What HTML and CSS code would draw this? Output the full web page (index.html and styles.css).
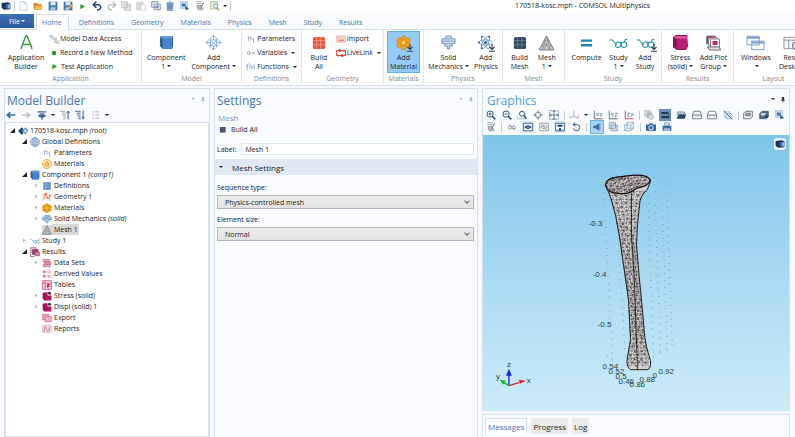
FILE: index.html
```
<!DOCTYPE html>
<html lang="en">
<head>
<meta charset="utf-8">
<title>170518-kosc.mph - COMSOL Multiphysics</title>
<link rel="stylesheet" href="styles.css">
</head>
<body>
<svg class="sprite" aria-hidden="true">
  <linearGradient id="logoFill"><stop offset="0" stop-color="#17365f"/><stop offset=".55" stop-color="#3b73b5"/><stop offset="1" stop-color="#e8eef5"/></linearGradient>
  <symbol id="logo" viewBox="0 0 16 16"><path d="M1 3l10-1 4 2v9l-10 1-4-3z" fill="#17365f"/><path d="M6 5h8v7H6z" fill="url(#logoFill)"/></symbol>
  <symbol id="new" viewBox="0 0 16 16"><path d="M3 1h7l4 4v10H3z M10 1v4h4" fill="#fff" stroke="#a9bdd6"/></symbol>
  <symbol id="open" viewBox="0 0 16 16"><path d="M1 3h5l2 2h6v9H1z" fill="#d98a25"/><path d="M4 8h12l-3 6H1z" fill="#f5b95a"/></symbol>
  <symbol id="save" viewBox="0 0 16 16"><path d="M1 1h14v14H1z" fill="#4473ad"/><path d="M4 1h8v6H4z" fill="#dce8f5"/><path d="M4 10h8v5H4z" fill="#a5c4e4"/></symbol>
  <symbol id="saveas" viewBox="0 0 16 16"><path d="M1 1h14v14H1z" fill="#4473ad"/><path d="M4 1h8v6H4z" fill="#dce8f5"/><path d="M4 10h6v5H4z" fill="#a5c4e4"/><path d="M8 14l1-4 5-5 2 2-5 5z" fill="#e3aa4c"/></symbol>
  <symbol id="play" viewBox="0 0 16 16"><path d="M3 2l11 6-11 6z" fill="#379a28"/></symbol>
  <symbol id="undo" viewBox="0 0 16 16"><path d="M3 6h7a4 4 0 0 1 0 8H8M7 1L2 6l5 5" fill="none" stroke="#274a7d" stroke-width="2.4"/></symbol>
  <symbol id="redo" viewBox="0 0 16 16"><path d="M13 6H6a4 4 0 0 0 0 8h2M9 1l5 5-5 5" fill="none" stroke="#b5b8bd" stroke-width="2"/></symbol>
  <symbol id="copy" viewBox="0 0 16 16"><path d="M1 1h9v10H1zM6 5h9v10H6z" fill="#e4e4e6" stroke="#bfc1c6" stroke-width="1.4"/><path d="M8 8h5M8 11h5" stroke="#bfc1c6"/></symbol>
  <symbol id="paste" viewBox="0 0 16 16"><path d="M1 2h10v12H1z" fill="#ddd" stroke="#c4c6ca"/><path d="M8 6h7v9H8z" fill="#fff" stroke="#c4c6ca"/></symbol>
  <symbol id="dup" viewBox="0 0 16 16"><path d="M1 1h10v9H1zM5 5h10v9H5z" fill="#dde3ed" stroke="#8290a8" stroke-width="1.4"/><path d="M10 7v5M7.500 9.500h5" stroke="#516d99"/></symbol>
  <symbol id="trash" viewBox="0 0 16 16"><path d="M3 4h10l-1 11H4z" fill="#86aad6" stroke="#4873aa"/><path d="M2 3h12M6 1h4M6 6v7M8 6v7M10 6v7" stroke="#4873aa"/></symbol>
  <symbol id="select" viewBox="0 0 16 16"><path d="M1 1h11v11H1z" fill="#cfe1f4" stroke="#6c98ca" stroke-dasharray="2 1"/><path d="M3 4h6v5H3z" fill="#4779b5"/><path d="M8 7l7 6-4 .5L9 15z" fill="#385b8a"/></symbol>
  <symbol id="brush" viewBox="0 0 16 16"><path d="M2 1h9M2 4h9M3 7h7v7H5z" fill="#c9b7aa" stroke="#777f8c"/><path d="M14 2l-4 7 3 5" fill="none" stroke="#5476a4" stroke-width="1.5"/></symbol>
  <symbol id="find" viewBox="0 0 16 16"><path d="M1 1h11v12H1z" fill="#e8edda" stroke="#9aa689"/><circle cx="9" cy="8" r="3.500" fill="#dcebf3" stroke="#5d8796"/><path d="M11 11l4 4" stroke="#be884d" stroke-width="2"/></symbol>
  <symbol id="appA" viewBox="0 0 16 16"><path d="M2 15L7.300 1h1.400L14 15M4 10h8" fill="none" stroke="#3f9e3c" stroke-width="1.600"/></symbol>
  <symbol id="access" viewBox="0 0 16 16"><path d="M1 2h5v3H1zM7 6h5v3H7zM11 11h5v4h-5zM4 5v3h3M9 9v4h2" fill="#dfe7dd" stroke="#a4aeb6"/></symbol>
  <symbol id="dot" viewBox="0 0 16 16"><circle cx="8" cy="8" r="3.500" fill="#2f8a2b"/></symbol>
  <symbol id="cube" viewBox="0 0 16 16"><path d="M1 2l3-1h11v11l-1 3H4l-3-3z" fill="#2b5f9e"/><path d="M4 4h10v11H4z" fill="#4484c8"/><path d="M1 2l3 2h10l1-3H3z" fill="#6b9fd6"/></symbol>
  <symbol id="addcomp" viewBox="0 0 16 16"><path d="M8 .500l7.500 7-7.500 7.500-7.500-7.500zM4 4l8 8M12 4l-8 8M5 5h6v6H5zM8 .500V5M8 11v4M.500 7.500H5M11 7.500h4.500" fill="none" stroke="#789fd0" stroke-width=".8"/></symbol>
  <symbol id="pi" viewBox="0 0 16 16"><path d="M2 5h7M4 5v6M8 5v6M12 8v6M10 8h3" fill="none" stroke="#869ebf" stroke-width="1.200"/></symbol>
  <symbol id="var" viewBox="0 0 16 16"><path d="M2 8c0-3 4-3 4 0s-4 3-4 0M6 5v6h1M9 7h5M9 9h5" fill="none" stroke="#9098a5" stroke-width="1.100"/></symbol>
  <symbol id="fx" viewBox="0 0 16 16"><path d="M5 3H3Q2 3 2 5v8M0 7h4M7 4Q5 8 7 12M8 6l4 5M12 6l-4 5M13 4q2 4 0 8" fill="none" stroke="#6f8db8" stroke-width="1.100"/></symbol>
  <symbol id="brick" viewBox="0 0 16 16"><rect x="2" y="2" width="13" height="13" rx="2" fill="#e2573b"/><path d="M6 2v13M10.500 2v13M2 6h13M2 10.500h13" stroke="#f4a993" stroke-width=".8"/></symbol>
  <symbol id="import" viewBox="0 0 16 16"><path d="M1 3h14v10H1zM1 6h14M6 6v7" fill="#fbecea" stroke="#d9968f"/><path d="M3 10h9M10 8l2 2-2 2" fill="none" stroke="#c3513e" stroke-width="1.200"/></symbol>
  <symbol id="link" viewBox="0 0 16 16"><path d="M7 4H4a4 4 0 0 0 0 8h3M9 4h3a4 4 0 0 1 0 8H9M5 2l3 2-3 2M11 10l-3 2 3 2" fill="none" stroke="#d6432e" stroke-width="2"/></symbol>
  <symbol id="mat" viewBox="0 0 16 16"><g fill="#f2a21c" stroke="#cf7d10" stroke-width=".7"><circle cx="8" cy="3.500" r="2.700"/><circle cx="3.500" cy="6" r="2.700"/><circle cx="12.500" cy="6" r="2.700"/><circle cx="3.500" cy="10.500" r="2.700"/><circle cx="12.500" cy="10.500" r="2.700"/><circle cx="8" cy="13" r="2.700"/><circle cx="8" cy="8" r="2.700" fill="#ffc856"/></g></symbol>
  <symbol id="matring" viewBox="0 0 16 16"><circle cx="8" cy="8" r="7.200" fill="#fff0cf" stroke="#e79a24" stroke-width="1.300"/><path d="M4 6l4-3 4 3v5l-4 2-4-2z" fill="#f1a52d"/><path d="M4 6l4 2 4-2M8 8v5" stroke="#fff1ca" fill="none"/></symbol>
  <symbol id="plus" viewBox="0 0 16 16"><path d="M8 0v11M3 6l5 5 5-5M2 14.500h12" fill="none" stroke="#2c4057" stroke-width="2.200"/></symbol>
  <symbol id="solid" viewBox="0 0 16 16"><path d="M5 1h6v3h4v5h-3v3H9v3H7v-3H4V9H1V4h4z" fill="#cad9eb" stroke="#7897bd"/><path d="M1 6.500h14M4 9.500h8M5 4h6" stroke="#7897bd" stroke-width=".8"/></symbol>
  <symbol id="atom" viewBox="0 0 16 16"><g fill="none" stroke="#6597bf" stroke-width=".9"><ellipse cx="8" cy="8" rx="7.300" ry="2.800"/><ellipse cx="8" cy="8" rx="7.300" ry="2.800" transform="rotate(60 8 8)"/><ellipse cx="8" cy="8" rx="7.300" ry="2.800" transform="rotate(120 8 8)"/></g><g fill="#285f93"><circle cx="8" cy="8" r="1.600"/><circle cx="4" cy="1.800" r="1"/><circle cx="12" cy="1.800" r="1"/><circle cx="1" cy="8" r="1"/><circle cx="4" cy="14" r="1"/></g></symbol>
  <symbol id="darkbrick" viewBox="0 0 16 16"><rect x="2" y="2" width="13" height="13" rx="2" fill="#33475c"/><path d="M6 2v13M10.500 2v13M2 6h13M2 10.500h13" stroke="#73889e" stroke-width=".8"/></symbol>
  <symbol id="mesh" viewBox="0 0 16 16"><path d="M8 1l7.500 14H.500z" fill="#c6c8ca" stroke="#6f757b" stroke-width=".9"/><path d="M5.500 5.500h5M3.500 10h9M8 1l4 14M8 1L4 15M5.500 5.500L11 15M10.500 5.500L5 15M3.500 10L6 15M12.500 10L10 15" fill="none" stroke="#82878c" stroke-width=".6"/></symbol>
  <symbol id="equal" viewBox="0 0 16 16"><path d="M2 6h12M2 11h12" stroke="#1c88aa" stroke-width="2.600"/></symbol>
  <symbol id="study" viewBox="0 0 22 16"><path d="M1 5q2-2 4 1t4 4" fill="none" stroke="#2f93ad" stroke-width="1.200"/><circle cx="10.500" cy="10" r="3.200" fill="none" stroke="#2f93ad" stroke-width="1.200"/><circle cx="17.500" cy="10" r="3.200" fill="none" stroke="#2f93ad" stroke-width="1.200"/><path d="M13 8q1-2 2 0M18 7q0-4 3-3" fill="none" stroke="#2f93ad" stroke-width="1.200"/></symbol>
  <symbol id="stress" viewBox="0 0 16 16"><path d="M0 2l3-2h12l1 12-2 4H4l-4-3z" fill="#8c1054"/><path d="M4 4h11v11H4z" fill="#bf1c74"/><path d="M0 2l4 2h11l1-3H3z" fill="#d8559a"/></symbol>
  <symbol id="plotgroup" viewBox="0 0 16 16"><path d="M1 1h9v8H1z" fill="#c3226f" stroke="#8f8790"/><path d="M3 3h9v8H3z" fill="#f3e7ed" stroke="#8f8790"/><path d="M5 4h9v8H5z" fill="#fff" stroke="#8f8790"/><path d="M7 6h5v4H7z" fill="#c3226f"/><path d="M2 12h12l1 3H4z" fill="#e3e1e4" stroke="#77717b"/></symbol>
  <symbol id="windows" viewBox="0 0 20 16"><path d="M1 1h13v9H1zM6 6h13v9H6z" fill="#f8fbff" stroke="#7f9fd0"/><path d="M1 2.500h13M6 7.500h13" stroke="#7f9fd0" stroke-width="2"/></symbol>
  <symbol id="reset" viewBox="0 0 20 16"><path d="M1 2h17v12H1zM1 5h17M6 5v9" fill="#f5f6f8" stroke="#8d929b"/><path d="M17 8a4 4 0 1 0 1 4" fill="none" stroke="#6289c0" stroke-width="1.500"/></symbol>
  <symbol id="left" viewBox="0 0 16 16"><path d="M15 8H3M7 4L2 8l5 4" fill="none" stroke="#386da8" stroke-width="2.600"/></symbol>
  <symbol id="right" viewBox="0 0 16 16"><path d="M1 8h12M9 4l5 4-5 4" fill="none" stroke="#b7bac0" stroke-width="2"/></symbol>
  <symbol id="show" viewBox="0 0 16 16"><path d="M1 3h14M4 6h8" stroke="#4a6a91" stroke-width="2"/><path d="M1 9q7-4 14 0-7 6-14 0" fill="#3e648f"/><path d="M8 10v5" stroke="#294d76" stroke-width="2"/></symbol>
  <symbol id="collapse" viewBox="0 0 16 16"><path d="M0 2h9M3 5h6M3 8h6M5 11h4M5 14h4" stroke="#8795ab" stroke-width="1.300"/><path d="M13 15V2M10.500 5L13 2l2.500 3" fill="none" stroke="#2b5790" stroke-width="1.500"/></symbol>
  <symbol id="expand" viewBox="0 0 16 16"><path d="M0 2h9M3 5h6M3 8h6M5 11h4M5 14h4" stroke="#496a93" stroke-width="1.500"/><path d="M13 1v13M10.500 11l2.500 3 2.500-3" fill="none" stroke="#2b5790" stroke-width="1.500"/></symbol>
  <symbol id="nodes" viewBox="0 0 16 16"><path d="M2 3h3M7 3h6M2 8h3M7 8h6M2 13h3M7 13h6" stroke="#a9adb5" stroke-width="1.500"/></symbol>
  <symbol id="root" viewBox="0 0 16 16"><path d="M0 8l6-6 3 3-2 3 2 3-3 3z" fill="#204b86"/><path d="M7 8l5-6 4 5-4 7z" fill="#5b88bf"/><path d="M9 8l3-3 2 3-2 3z" fill="#dce8f5"/></symbol>
  <symbol id="globe" viewBox="0 0 16 16"><circle cx="8" cy="8" r="7.200" fill="#e8f0fa" stroke="#6283b4"/><ellipse cx="8" cy="8" rx="3.500" ry="7.200" fill="none" stroke="#6283b4"/><path d="M8 1v14M1 8h14M2 4.500h12M2 11.500h12" stroke="#6283b4" stroke-width=".9"/></symbol>
  <symbol id="defs" viewBox="0 0 16 16"><path d="M2 2h12v12H2z" fill="#4f80bc"/><path d="M2 5h12M2 8h12M2 11h12M6 2v12" stroke="#a9c5e5"/></symbol>
  <symbol id="geom" viewBox="0 0 16 16"><path d="M1 14L6 3l7 11M1 4l9 6 5-4M4 10h8" fill="none" stroke="#e17c5b" stroke-width="1.300"/><path d="M4 1h4v4H4zM11 4h3v3h-3z" fill="#e17c5b"/></symbol>
  <symbol id="gem" viewBox="0 0 16 16"><path d="M4 2h8v3h3v4l-4 2-3 4-3-4-4-2V5h3z" fill="#aec6e2" stroke="#6f90bb"/><path d="M1 8h14M4 5h8" stroke="#6f90bb"/></symbol>
  <symbol id="results" viewBox="0 0 16 16"><path d="M1 1h9v8H1z" fill="#e9bdd2" stroke="#a45880"/><path d="M4 4h9v8H4z" fill="#b5306e" stroke="#774a62"/><path d="M8 8h7v6H8z" fill="#df7fa8" stroke="#774a62"/><path d="M1 10v5h6" fill="none" stroke="#817680" stroke-width="1.500"/></symbol>
  <symbol id="data" viewBox="0 0 16 16"><path d="M2 2h10v4H2zM4 6h10v4H4zM2 10h11v4H2z" fill="#e9a5bd" stroke="#bd5e82"/></symbol>
  <symbol id="derived" viewBox="0 0 16 16"><path d="M2 3h3v3H2zM2 10h3v3H2zM10 3h4M10 6h4M10 11h4M10 13h4M8 3v3M8 10v3" fill="#dc8ba9" stroke="#cd648c" stroke-width="1.200"/></symbol>
  <symbol id="tables" viewBox="0 0 16 16"><path d="M1 1h14v14H1zM1 5h14M5 1v14M10 5v10M5 10h10" fill="#fae1eb" stroke="#c24b7b" stroke-width="1.200"/><path d="M8 6h6L8 13z" fill="#ca3970"/></symbol>
  <symbol id="plot" viewBox="0 0 16 16"><path d="M1 3l3-1h5v5h6v8H4l-3-3z" fill="#b5125f"/><path d="M4 5v10" stroke="#7c0944"/><circle cx="12" cy="3.500" r="2.500" fill="#5b2143"/></symbol>
  <symbol id="export" viewBox="0 0 16 16"><path d="M1 2h10v9H1zM5 6h10v8H5z" fill="#eda4bf" stroke="#c45b84"/><path d="M6 8h7M6 11h7" stroke="#fff"/></symbol>
  <symbol id="reports" viewBox="0 0 16 16"><path d="M1 2h14v12H1z" fill="#f7e3e9" stroke="#d6adb9"/><path d="M3 12l3-8 3 8 4-8M4 4v8M12 4v8" fill="none" stroke="#c4708a"/></symbol>
  <symbol id="zin" viewBox="0 0 16 16"><circle cx="6.500" cy="6.500" r="5" fill="#f5f9fd" stroke="#2f5584" stroke-width="1.600"/><path d="M10 10l5 5" stroke="#2f5584" stroke-width="2.600"/><path d="M4 6.500h5M6.500 4v5" stroke="#2f5584" stroke-width="1.400"/></symbol>
  <symbol id="zout" viewBox="0 0 16 16"><circle cx="6.500" cy="6.500" r="5" fill="#f5f9fd" stroke="#2f5584" stroke-width="1.600"/><path d="M10 10l5 5" stroke="#2f5584" stroke-width="2.600"/><path d="M4 6.500h5" stroke="#2f5584" stroke-width="1.400"/></symbol>
  <symbol id="zbox" viewBox="0 0 16 16"><path d="M1 15V8l7-7" fill="none" stroke="#8193ad" stroke-dasharray="2 1"/><path d="M2 14h11V5" fill="none" stroke="#6e84a3"/><circle cx="8" cy="6" r="4" fill="#f5f9fd" stroke="#2f5584" stroke-width="1.500"/><path d="M11 9l4 5" stroke="#2f5584" stroke-width="2.200"/></symbol>
  <symbol id="cross" viewBox="0 0 16 16"><circle cx="8" cy="8" r="4.500" fill="none" stroke="#69737f" stroke-width="1.200"/><path d="M8 0v6M8 10v6M0 8h6M10 8h6" stroke="#69737f" stroke-width="1.300"/></symbol>
  <symbol id="extents" viewBox="0 0 16 16"><path d="M1 1h14v14H1z" fill="none" stroke="#5d7594" stroke-dasharray="4 1"/><path d="M8 1v14M1 8h14M6 3l2-2 2 2M6 13l2 2 2-2M3 6L1 8l2 2M13 6l2 2-2 2" fill="none" stroke="#3f5f87" stroke-width="1.300"/></symbol>
  <symbol id="axes" viewBox="0 0 16 16"><path d="M8 1v9" stroke="#94a1c2" stroke-width="1.300"/><path d="M8 10l-6 3-1-4" fill="none" stroke="#91a89a" stroke-width="1.300"/><path d="M8 10l6 3 1-4" fill="none" stroke="#d48a83" stroke-width="1.300"/></symbol>
  <symbol id="xy" viewBox="0 0 16 16"><path d="M2 1v13h13" fill="none" stroke="#4f6c8f" stroke-width="1.400"/><path d="M5 5l4 5M9 5l-4 5M11 5l2 3M15 5l-3 6" stroke="#64799a" stroke-width="1.200"/><path d="M2 14h13" stroke="#d37c72"/></symbol>
  <symbol id="yz" viewBox="0 0 16 16"><path d="M2 1v13h13" fill="none" stroke="#4f6c8f" stroke-width="1.400"/><path d="M5 5l2 3M9 5l-3 6M11 5h4l-4 5h4" fill="none" stroke="#64799a" stroke-width="1.200"/><path d="M2 14h13" stroke="#70a277"/></symbol>
  <symbol id="zx" viewBox="0 0 16 16"><path d="M2 1v13h13" fill="none" stroke="#c03d48" stroke-width="1.400"/><path d="M5 5h4l-4 5h4M11 5l4 5M15 5l-4 5" fill="none" stroke="#64799a" stroke-width="1.200"/></symbol>
  <symbol id="overlap" viewBox="0 0 16 16"><path d="M1 1h9v9H1z" fill="#d7dade" stroke="#a8adb4"/><path d="M4 4h9v9H4z" fill="#b3b8be"/><circle cx="11" cy="11" r="4" fill="#d8dadc" stroke="#a5a9af"/></symbol>
  <symbol id="domains" viewBox="0 0 16 16"><path d="M2 3h11l2 4v6H2z" fill="#1f3d61"/><path d="M2 8h12" stroke="#c3d6ea" stroke-width="1.500"/></symbol>
  <symbol id="dfolder" viewBox="0 0 16 16"><path d="M2 3h11l2 4H2z" fill="#bfd0e2" stroke="#4f6c8f"/><path d="M4 7h12l-2 7H1z" fill="#26476d"/></symbol>
  <symbol id="box" viewBox="0 0 16 16"><path d="M3 2h10l2 5v7H1V7zM1 8h14" fill="#f7f9fc" stroke="#5f738c" stroke-width="1.400"/><path d="M4 10h8" stroke="#a1afc0"/></symbol>
  <symbol id="nobox" viewBox="0 0 16 16"><path d="M2 3h9v8H2zM5 6h9v8H5z" fill="none" stroke="#7495bd"/><path d="M1 1l14 14" stroke="#385f91" stroke-width="1.500"/></symbol>
  <symbol id="clip" viewBox="0 0 16 16"><path d="M1 5l4-3h10v9l-4 3H1z" fill="#e7e9ed" stroke="#626e7d" stroke-width="1.300"/><path d="M4 5h8v4H4zM6 2h4" stroke="#626e7d" fill="#8f9bac"/></symbol>
  <symbol id="clip2" viewBox="0 0 16 16"><path d="M1 6l4-4h10v8l-4 4H1z" fill="#526982" stroke="#334961"/><path d="M3 5h8v4H3z" fill="#cbd4df"/><circle cx="12" cy="10" r="3" fill="#2d4967"/></symbol>
  <symbol id="chain" viewBox="0 0 16 16"><circle cx="5" cy="9" r="2.500" fill="none" stroke="#7c838d" stroke-width="1.300"/><circle cx="11" cy="9" r="2.500" fill="none" stroke="#7c838d" stroke-width="1.300"/><path d="M3 4l10 9" stroke="#7c838d"/></symbol>
  <symbol id="eye" viewBox="0 0 16 16"><path d="M1 2h14v12H1z" fill="#f5f9fd" stroke="#335780" stroke-width="1.400"/><path d="M2 8q6-6 12 0-6 6-12 0" fill="#284b73"/><circle cx="8" cy="8" r="1.200" fill="#d5e5f6"/></symbol>
  <symbol id="noeye" viewBox="0 0 16 16"><path d="M1 2h14v12H1z" fill="#f5f9fd" stroke="#7f8c9c" stroke-width="1.300"/><path d="M3 8q5-5 10 0-5 5-10 0M4 4l9 9" fill="none" stroke="#7f8c9c" stroke-width="1.300"/></symbol>
  <symbol id="eyedown" viewBox="0 0 16 16"><path d="M1 2h14v12H1z" fill="#f5f9fd" stroke="#335780" stroke-width="1.400"/><path d="M3 6q5-4 10 0-5 4-10 0M6 10h4v4H6z" fill="#284b73"/></symbol>
  <symbol id="rot" viewBox="0 0 16 16"><path d="M4 4h5a5 5 0 1 1-5 6M7 1L3 4l4 3" fill="none" stroke="#435c7e" stroke-width="1.600"/></symbol>
  <symbol id="light" viewBox="0 0 16 16"><path d="M2 6h3l7-4v12l-7-4H2z" fill="#416e9d"/><path d="M13 2v12" stroke="#6b94bd"/></symbol>
  <symbol id="trans" viewBox="0 0 16 16"><path d="M2 1h10v9H2zM5 5h10v9H5z" fill="#d4e3f2" stroke="#6b92bf" stroke-width="1.200"/></symbol>
  <symbol id="wire" viewBox="0 0 16 16"><path d="M1 5l4-4h10v9l-4 4H1zM1 5h10v9M11 5l4-4M5 1v9h10M1 14l4-4" fill="none" stroke="#6b92bf"/></symbol>
  <symbol id="camera" viewBox="0 0 16 16"><path d="M0 4h4l2-2h4l2 2h4v10H0z" fill="#2e659f"/><circle cx="8" cy="9" r="3.500" fill="#2e659f" stroke="#fff" stroke-width="1.400"/></symbol>
  <symbol id="print" viewBox="0 0 16 16"><path d="M4 1h8v5H4z" fill="#c9dcf0" stroke="#6d94bf"/><path d="M1 6h14v8H1z" fill="#3b6fa9"/><path d="M3 10h10v4H3z" fill="#9fbddd"/></symbol>
  <symbol id="pin" viewBox="0 0 16 16"><path d="M5 1h6v8H5zM3 9h10v2H3zM7 11h2v5H7z" fill="currentColor"/></symbol>
</svg>

<header class="titlebar">
  <div class="quick">
    <svg class="ic"><use href="#logo"/></svg><i class="bar"></i>
    <button class="tool" aria-label="New"><svg class="ic"><use href="#new"/></svg></button>
    <button class="tool" aria-label="Open"><svg class="ic"><use href="#open"/></svg></button>
    <button class="tool" aria-label="Save"><svg class="ic"><use href="#save"/></svg></button>
    <button class="tool" aria-label="Save as"><svg class="ic"><use href="#saveas"/></svg></button>
    <button class="tool" aria-label="Run"><svg class="ic small"><use href="#play"/></svg></button>
    <button class="tool" aria-label="Undo"><svg class="ic"><use href="#undo"/></svg></button>
    <button class="tool" aria-label="Redo"><svg class="ic"><use href="#redo"/></svg></button>
    <button class="tool" aria-label="Copy"><svg class="ic"><use href="#copy"/></svg></button>
    <button class="tool" aria-label="Paste"><svg class="ic"><use href="#paste"/></svg></button>
    <button class="tool" aria-label="Duplicate"><svg class="ic"><use href="#dup"/></svg></button>
    <button class="tool" aria-label="Delete"><svg class="ic"><use href="#trash"/></svg></button>
    <button class="tool" aria-label="Select"><svg class="ic"><use href="#select"/></svg></button>
    <button class="tool" aria-label="Clear"><svg class="ic"><use href="#brush"/></svg></button>
    <button class="tool" aria-label="Find"><svg class="ic"><use href="#find"/></svg></button>
    <i class="caret"></i><i class="bar"></i>
  </div>
  <h1>170518-kosc.mph - COMSOL Multiphysics</h1>
</header>

<nav class="tabs">
  <button class="file">File<i class="caret"></i></button>
  <a href="#" class="active">Home</a><a href="#">Definitions</a><a href="#">Geometry</a><a href="#">Materials</a><a href="#">Physics</a><a href="#">Mesh</a><a href="#">Study</a><a href="#">Results</a>
</nav>

<div class="ribbon">
  <section class="group g-app"><div class="items">
    <button class="big w-app"><svg class="bi"><use href="#appA"/></svg><span>Application<br>Builder</span></button>
    <div class="stack">
      <button><svg class="ic"><use href="#access"/></svg>Model Data Access</button>
      <button><svg class="ic"><use href="#dot"/></svg>Record a New Method</button>
      <button><svg class="ic small"><use href="#play"/></svg>Test Application</button>
    </div></div><h2>Application</h2></section>
  <section class="group g-model"><div class="items">
    <button class="big"><svg class="bi"><use href="#cube"/></svg><span>Component<br>1<i class="caret"></i></span></button>
    <button class="big"><svg class="bi wide"><use href="#addcomp"/></svg><span>Add<br>Component<i class="caret"></i></span></button>
    </div><h2>Model</h2></section>
  <section class="group g-defs"><div class="items"><div class="stack">
      <button><svg class="ic"><use href="#pi"/></svg>Parameters</button>
      <button><svg class="ic"><use href="#var"/></svg>Variables<i class="caret"></i></button>
      <button><svg class="ic"><use href="#fx"/></svg>Functions<i class="caret"></i></button>
    </div></div><h2>Definitions</h2></section>
  <section class="group g-geom"><div class="items">
    <button class="big w-build"><svg class="bi"><use href="#brick"/></svg><span>Build<br>All</span></button>
    <div class="stack">
      <button><svg class="ic"><use href="#import"/></svg>Import</button>
      <button><svg class="ic"><use href="#link"/></svg>LiveLink<i class="caret"></i></button>
    </div></div><h2>Geometry</h2></section>
  <section class="group g-mat"><div class="items">
    <button class="big on"><span class="pic"><svg class="bi"><use href="#mat"/></svg><svg class="badge"><use href="#plus"/></svg></span><span>Add<br>Material</span></button>
    </div><h2>Materials</h2></section>
  <section class="group g-phys"><div class="items">
    <button class="big"><svg class="bi"><use href="#solid"/></svg><span>Solid<br>Mechanics<i class="caret"></i></span></button>
    <button class="big"><span class="pic"><svg class="bi"><use href="#atom"/></svg><svg class="badge"><use href="#plus"/></svg></span><span>Add<br>Physics</span></button>
    </div><h2>Physics</h2></section>
  <section class="group g-mesh"><div class="items">
    <button class="big"><svg class="bi"><use href="#darkbrick"/></svg><span>Build<br>Mesh</span></button>
    <button class="big"><svg class="bi wide"><use href="#mesh"/></svg><span>Mesh<br>1<i class="caret"></i></span></button>
    </div><h2>Mesh</h2></section>
  <section class="group g-study"><div class="items">
    <button class="big"><svg class="bi"><use href="#equal"/></svg><span>Compute</span></button>
    <button class="big"><svg class="bi wide"><use href="#study"/></svg><span>Study<br>1<i class="caret"></i></span></button>
    <button class="big"><span class="pic"><svg class="bi wide"><use href="#study"/></svg><svg class="badge"><use href="#plus"/></svg></span><span>Add<br>Study</span></button>
    </div><h2>Study</h2></section>
  <section class="group g-res"><div class="items">
    <button class="big"><svg class="bi"><use href="#stress"/></svg><span>Stress<br>(solid)<i class="caret"></i></span></button>
    <button class="big"><svg class="bi wide"><use href="#plotgroup"/></svg><span>Add Plot<br>Group<i class="caret"></i></span></button>
    </div><h2>Results</h2></section>
  <section class="group g-lay"><div class="items">
    <button class="big"><svg class="bi wide"><use href="#windows"/></svg><span>Windows<br><i class="caret"></i></span></button>
    <button class="big"><svg class="bi wide"><use href="#reset"/></svg><span>Reset<br>Desktop</span></button>
    </div><h2>Layout</h2></section>
</div>

<main class="desk">
  <section class="panel builder">
    <div class="head"><h2>Model Builder</h2><span class="ctl"><i class="caret"></i><svg><use href="#pin"/></svg></span></div>
    <div class="buildbar">
      <button class="tool" aria-label="Back"><svg class="ic"><use href="#left"/></svg></button>
      <button class="tool" aria-label="Forward"><svg class="ic"><use href="#right"/></svg></button>
      <button class="tool" aria-label="Show"><svg class="ic"><use href="#show"/></svg></button>
      <i class="caret"></i>
      <button class="tool" aria-label="Collapse"><svg class="ic"><use href="#collapse"/></svg></button>
      <button class="tool" aria-label="Expand"><svg class="ic"><use href="#expand"/></svg></button>
      <button class="tool" aria-label="Node text"><svg class="ic"><use href="#nodes"/></svg></button>
      <i class="caret"></i>
    </div>
    <ul class="tree">
      <li><div class="row"><i class="tw open"></i><svg class="ic"><use href="#root"/></svg><span>170518-kosc.mph <em>(root)</em></span></div>
      <ul>
        <li><div class="row"><i class="tw open"></i><svg class="ic"><use href="#globe"/></svg><span>Global Definitions</span></div>
          <ul>
            <li class="row"><i class="tw"></i><svg class="ic"><use href="#pi"/></svg><span>Parameters</span></li>
            <li class="row"><i class="tw"></i><svg class="ic"><use href="#matring"/></svg><span>Materials</span></li>
          </ul></li>
        <li><div class="row"><i class="tw open"></i><svg class="ic"><use href="#cube"/></svg><span>Component 1 <em>(comp1)</em></span></div>
          <ul>
            <li class="row"><i class="tw shut"></i><svg class="ic"><use href="#defs"/></svg><span>Definitions</span></li>
            <li class="row"><i class="tw shut"></i><svg class="ic"><use href="#geom"/></svg><span>Geometry 1</span></li>
            <li class="row"><i class="tw shut"></i><svg class="ic"><use href="#mat"/></svg><span>Materials</span></li>
            <li class="row"><i class="tw shut"></i><svg class="ic"><use href="#gem"/></svg><span>Solid Mechanics <em>(solid)</em></span></li>
            <li class="row sel"><i class="tw"></i><svg class="ic"><use href="#mesh"/></svg><span>Mesh 1</span></li>
          </ul></li>
        <li class="row"><i class="tw shut"></i><svg class="ic"><use href="#study"/></svg><span>Study 1</span></li>
        <li><div class="row"><i class="tw open"></i><svg class="ic"><use href="#results"/></svg><span>Results</span></div>
          <ul>
            <li class="row"><i class="tw shut"></i><svg class="ic"><use href="#data"/></svg><span>Data Sets</span></li>
            <li class="row"><i class="tw"></i><svg class="ic"><use href="#derived"/></svg><span>Derived Values</span></li>
            <li class="row"><i class="tw"></i><svg class="ic"><use href="#tables"/></svg><span>Tables</span></li>
            <li class="row"><i class="tw shut"></i><svg class="ic"><use href="#plot"/></svg><span>Stress (solid)</span></li>
            <li class="row"><i class="tw shut"></i><svg class="ic"><use href="#plot"/></svg><span>Displ (solid) 1</span></li>
            <li class="row"><i class="tw"></i><svg class="ic"><use href="#export"/></svg><span>Export</span></li>
            <li class="row"><i class="tw"></i><svg class="ic"><use href="#reports"/></svg><span>Reports</span></li>
          </ul></li>
      </ul></li>
    </ul>
  </section>

  <section class="panel settings">
    <div class="head"><h2>Settings</h2><span class="ctl"><i class="caret"></i><svg><use href="#pin"/></svg></span></div>
    <h3>Mesh</h3>
    <button class="buildall"><svg class="ic small"><use href="#darkbrick"/></svg>Build All</button>
    <div class="labelrow"><label for="lab">Label:</label><input id="lab" type="text" value="Mesh 1"></div>
    <button class="secthead"><i class="caret"></i>Mesh Settings</button>
    <div class="fields">
      <label for="seq">Sequence type:</label>
      <span class="pick"><select id="seq"><option>Physics-controlled mesh</option></select></span>
      <label for="size">Element size:</label>
      <span class="pick"><select id="size"><option>Normal</option></select></span>
    </div>
  </section>

  <div class="rightcol">
    <section class="panel graphics">
      <div class="head"><h2>Graphics</h2><span class="ctl dark"><i class="caret"></i><svg><use href="#pin"/></svg></span></div>
      <div class="gbar">
        <button class="tool" aria-label="Zoom in"><svg class="ic"><use href="#zin"/></svg></button>
        <button class="tool" aria-label="Zoom out"><svg class="ic"><use href="#zout"/></svg></button>
        <button class="tool" aria-label="Zoom box"><svg class="ic"><use href="#zbox"/></svg></button>
        <button class="tool" aria-label="Zoom selected"><svg class="ic"><use href="#cross"/></svg></button>
        <button class="tool" aria-label="Zoom extents"><svg class="ic"><use href="#extents"/></svg></button>
        <i class="bar"></i>
        <button class="tool" aria-label="Default view"><svg class="ic"><use href="#axes"/></svg></button>
        <i class="caret"></i>
        <button class="tool" aria-label="XY view"><svg class="ic"><use href="#xy"/></svg></button>
        <button class="tool" aria-label="YZ view"><svg class="ic"><use href="#yz"/></svg></button>
        <button class="tool" aria-label="ZX view"><svg class="ic"><use href="#zx"/></svg></button>
        <i class="bar"></i>
        <button class="tool" aria-label="Overlap"><svg class="ic"><use href="#overlap"/></svg></button>
        <button class="tool deep" aria-label="Select domains"><svg class="ic"><use href="#domains"/></svg></button>
        <button class="tool" aria-label="Select boundaries"><svg class="ic"><use href="#dfolder"/></svg></button>
        <button class="tool" aria-label="Select edges"><svg class="ic"><use href="#box"/></svg></button>
        <button class="tool" aria-label="Select points"><svg class="ic"><use href="#box"/></svg></button>
        <button class="tool" aria-label="No selection"><svg class="ic"><use href="#nobox"/></svg></button>
        <i class="bar"></i>
        <button class="tool" aria-label="Clip"><svg class="ic"><use href="#clip"/></svg></button>
        <button class="tool" aria-label="Clip view"><svg class="ic"><use href="#clip2"/></svg></button>
        <button class="tool" aria-label="Select box"><svg class="ic"><use href="#select"/></svg></button>
      </div>
      <div class="gbar second">
        <button class="tool" aria-label="Clear selection"><svg class="ic"><use href="#brush"/></svg></button>
        <i class="bar"></i>
        <button class="tool" aria-label="Link"><svg class="ic"><use href="#chain"/></svg></button>
        <button class="tool lit" aria-label="Show"><svg class="ic"><use href="#eye"/></svg></button>
        <button class="tool" aria-label="Hide"><svg class="ic"><use href="#noeye"/></svg></button>
        <button class="tool lit" aria-label="Show selected"><svg class="ic"><use href="#eyedown"/></svg></button>
        <button class="tool" aria-label="Reset hiding"><svg class="ic"><use href="#rot"/></svg></button>
        <i class="bar"></i>
        <button class="tool on" aria-label="Scene light"><svg class="ic"><use href="#light"/></svg></button>
        <button class="tool" aria-label="Transparency"><svg class="ic"><use href="#trans"/></svg></button>
        <button class="tool" aria-label="Wireframe"><svg class="ic"><use href="#wire"/></svg></button>
        <i class="bar"></i>
        <button class="tool" aria-label="Snapshot"><svg class="ic"><use href="#camera"/></svg></button>
        <button class="tool" aria-label="Print"><svg class="ic"><use href="#print"/></svg></button>
      </div>
      <div class="view">
        <svg class="scene" viewBox="0 0 307 276" preserveAspectRatio="xMidYMid meet">
          <g class="guides">
            <path d="M121 50L130 230M133 60L143 225M165 40L171 224M172 42L178 219M179 40L185 222M184 44L190 210M165 224L193 208M136 230L121 218"/>
          </g>
          <path class="bone" d="M123 50Q123 43 133 42L150 40Q168 40 168 46L165 54Q157 61 157 70L155 90 154 110 157 145 160 175 162 200 164 212 168 226Q169 234 165 235L148 235Q143 232 145 222L148 205 146 165 141 130 137 102 133 80 128 62Z"/>
          <path id="shaft" class="mesh"/>
          <path class="ridge" d="M149 58L149 100 152 150 155 235"/>
          <path class="cap" d="M123 50Q123 44 133 42L150 40Q166 39 168 45Q166 51 154 53Q146 60 136 58Q125 58 123 50Z"/>
          <path id="plateau" class="mesh"/>
          <g class="ticks">
            <text x="106" y="91">-0.3</text><text x="110" y="142">-0.4</text><text x="115" y="192">-0.5</text>
            <text x="120" y="234">0.54</text><text x="126" y="239">0.52</text><text x="133" y="244">0.5</text><text x="136" y="249">0.46</text><text x="147" y="252">0.86</text><text x="157" y="247">0.88</text><text x="170" y="243">0</text><text x="176" y="239">0.92</text>
          </g>
          <g class="triad">
            <path d="M26 251V239" stroke="#1a2be0"/><path d="M26 234l3 7h-6z" fill="#1a2be0"/>
            <path d="M26 251L36 248" stroke="#d8202c"/><path d="M43 246l-7-1 1 4z" fill="#d8202c"/>
            <path d="M26 251L21 248" stroke="#18b52d"/><path d="M17 245l6 1-3 4z" fill="#18b52d"/>
            <text x="24" y="232">z</text><text x="44" y="248">x</text><text x="13" y="244">y</text>
          </g>
        </svg>
        <span class="corner"><svg class="ic"><use href="#logo"/></svg></span>
      </div>
    </section>
    <section class="panel messages">
      <button class="active">Messages</button><button>Progress</button><button>Log</button>
    </section>
  </div>
</main>
<script src="mesh.js"></script>
</body>
</html>
```
FILE: styles.css
```
* { box-sizing: border-box; margin: 0; padding: 0; }
:root { --line: #d6dfeb; --pale: #f9fbfe; --blue: #4a73b0; }
body {
  height: 100vh; display: flex; flex-direction: column; overflow: hidden;
  font: 7px/9px "Open Sans", "Noto Sans", sans-serif; color: #222; background: #f5f8fc;
}
button, input, select { font: inherit; color: inherit; border: 0; background: none; }
h1, h2, h3 { font-weight: 400; }
a { color: inherit; text-decoration: none; }
ul { list-style: none; }
svg { display: block; flex: none; }
.sprite { position: absolute; width: 0; height: 0; }
.ic { width: 10px; height: 10px; }
.ic.small { width: 7px; height: 7px; margin: 0 2px; }
.bar { width: 1px; height: 9px; background: #c5cad2; }
.caret { display: inline-block; flex: none; border: 2px solid transparent; border-top-color: currentColor; border-bottom: 0; }
.tool { display: grid; place-items: center; width: 12px; height: 12px; flex: none; }
.tool.on { background: #a8d3f5; outline: 1px solid #6fb0e2; }
.tool.lit { background: #d9e7f5; }
.tool.deep { background: #6f90b5; }

.titlebar { display: flex; align-items: flex-start; height: 14px; background: #fff; flex: none; }
.quick { display: flex; align-items: center; justify-content: space-between; width: 231px; padding-left: 1px; flex: none; }
.titlebar h1 { font-size: 7px; line-height: 11px; margin-left: 284px; white-space: nowrap; }

.tabs { display: flex; align-items: stretch; height: 16px; background: var(--pale); border-bottom: 1px solid var(--line); color: var(--blue); flex: none; }
.tabs a { padding: 4px 8px 0; margin-right: 1px; }
.tabs .active { background: #fff; border: 1px solid var(--line); border-bottom: 0; padding: 3px 6px 0 5px; margin: 0 2px; height: 16px; }
.tabs .file { display: flex; align-items: center; justify-content: center; gap: 1px; width: 34px; height: 14px; background: linear-gradient(#3c6fb4, #2d5ca0); color: #fff; }

.ribbon { display: flex; height: 56px; background: #fff; border-bottom: 1px solid var(--line); flex: none; overflow: hidden; }
.group { display: flex; flex-direction: column; flex: none; padding-top: 1px; border-right: 1px solid #e2e6ec; margin-bottom: 2px; }
.group h2 { font-size: 7px; line-height: 9px; color: #858a92; text-align: center; }
.items { display: flex; align-items: flex-start; justify-content: space-evenly; height: 44px; }
.big { display: flex; flex-direction: column; align-items: center; gap: 3px; padding: 4px 1px 0; line-height: 9px; white-space: nowrap; }
.big .caret { margin-left: 2px; vertical-align: 2px; }
.big.on { background: #93cbf8; border: 1px solid #63aee8; padding: 3px 0 0; width: 33px; height: 42px; }
.bi { width: 15px; height: 15px; }
.bi.wide { width: 19px; height: 16px; margin-bottom: -1px; }
.pic { position: relative; }
.badge { position: absolute; right: -3px; bottom: -2px; width: 8px; height: 8px; }
.stack { display: flex; flex-direction: column; gap: 5px; padding-top: 3px; }
.stack button { display: flex; align-items: center; gap: 1px; height: 9px; white-space: nowrap; }
.stack .caret { margin-left: 3px; }
.w-app { width: 46px; }
.w-build { width: 30px; }
.g-app { width: 142px; }
.g-app .items { justify-content: flex-start; padding-left: 3px; }
.g-model { width: 100px; }
.g-defs { width: 60px; }
.g-geom { width: 82px; }
.g-mat { width: 40px; }
.g-phys { width: 79px; }
.g-mesh { width: 62px; }
.g-study { width: 97px; }
.g-res { width: 72px; }
.g-lay { width: 80px; }

.desk { flex: 1; display: flex; gap: 4px; padding: 2px 5px 0 4px; min-height: 0; }
.panel { background: var(--pale); border: 1px solid var(--line); border-bottom: 0; }
.head { display: flex; justify-content: space-between; height: 20px; padding: 3px 3px 0 2px; flex: none; }
.head h2 { font-size: 12px; line-height: 17px; color: var(--blue); }
.graphics .head { padding-left: 4px; }
.graphics .head h2 { color: #55a0dc; }
.ctl { display: flex; align-items: center; gap: 5px; height: 14px; color: #b5bdc8; }
.ctl.dark { color: #333; }
.ctl svg { width: 6px; height: 7px; }
.builder { width: 206px; flex: none; display: flex; flex-direction: column; }
.buildbar { display: flex; align-items: center; justify-content: space-between; width: 104px; height: 12px; }
.tree { flex: 1; background: #fff; border: 1px solid var(--line); padding: 2px 0 0; margin-top: 1px; }
.tree ul { padding-left: 12px; }
.row { display: flex; align-items: center; height: 11px; white-space: nowrap; }
.row span { padding: 0 1px; margin-left: 1px; line-height: 11px; }
.sel span, .sel svg { background: #d8d8d8; }
.sel span { margin-left: 0; padding-left: 2px; }
.tw { width: 12px; display: grid; place-items: center; flex: none; }
.tw.open::before { content: ""; border: solid transparent; border-width: 0 0 5px 5px; border-bottom-color: #222; }
.tw.shut::before { content: ""; width: 3px; height: 5px; background: #b4bac3; clip-path: polygon(0 0, 100% 50%, 0 100%); }

.settings { width: 264px; flex: none; }
.settings h3 { font-size: 8px; line-height: 11px; padding: 3px 0 0 3px; color: #7593c5; }
.buildall { display: flex; align-items: center; gap: 3px; height: 12px; padding-left: 2px; }
.labelrow { display: flex; align-items: center; height: 12px; margin: 8px 3px 4px 2px; gap: 5px; }
.labelrow input { flex: 1; min-width: 0; height: 12px; padding: 0 3px; background: #fff; border: 1px solid #e3e8ef; }
.secthead { display: flex; align-items: center; gap: 9px; width: 100%; height: 16px; padding-left: 4px; background: #dfe8f3; font-size: 8px; }
.fields { display: flex; flex-direction: column; padding: 8px 3px 0 2px; }
.fields label { height: 12px; line-height: 10px; }
.pick { position: relative; margin-bottom: 6px; }
.pick select { appearance: none; display: block; width: 100%; height: 14px; padding: 0 7px; background: linear-gradient(#ededed, #e2e2e2); border: 1px solid #b5b8bc; }
.pick::after { content: ""; position: absolute; right: 5px; top: 4px; width: 3px; height: 3px; border: solid #666; border-width: 0 1px 1px 0; transform: rotate(45deg); }

.rightcol { flex: 1; min-width: 0; display: flex; flex-direction: column; gap: 3px; }
.graphics { flex: 1; display: flex; flex-direction: column; min-height: 0; }
.gbar { display: flex; align-items: center; justify-content: space-between; height: 12px; padding: 0 3px 0 2px; flex: none; }
.gbar.second { width: 63%; padding-right: 3px; margin-bottom: 2px; }
.view { position: relative; flex: 1; min-height: 0; background: linear-gradient(#7dc6ea, #a9d9f1 50%, #cdebf8); }
.scene { width: 100%; height: 100%; }
.corner { position: absolute; top: 3px; right: 3px; padding: 1px; background: #e6f2fa; border-radius: 3px; }
.guides { fill: none; stroke: #6b9db9; stroke-width: 1; stroke-dasharray: 1 6; }
.bone { fill: #d3d0d2; stroke: #222; stroke-width: 1; }
.cap { fill: #c9c4c6; stroke: #111; stroke-width: 1.3; }
.mesh { fill: none; stroke: #262323; stroke-width: .5; stroke-dasharray: 2 1; }
.ridge { fill: none; stroke: #111; stroke-width: .8; }
.ticks, .triad { font: 8px "Liberation Sans", sans-serif; fill: #24404f; }
.triad path { stroke-width: 1.4; }

.messages { display: flex; align-items: flex-start; gap: 4px; height: 23px; padding: 3px 2px 0; flex: none; font-size: 8px; }
.messages button { height: 16px; padding: 0 2px; background: #ebebeb; }
.messages .active { background: #fff; border: 1px solid var(--line); border-bottom: 0; color: var(--blue); }
```
FILE: mesh.js
```
// Outline of the bone as [y, left x, right x] rows, from the neck to the ankle.
const rows = [
  [56, 126, 164], [62, 128, 159], [80, 133, 156], [102, 137, 154], [130, 141, 156],
  [165, 146, 159], [205, 148, 163], [222, 145, 167], [235, 147, 166]
];
const cap = [[42, 133, 165], [45, 125, 167], [49, 124, 164], [53, 125, 154], [57, 131, 148]];

let seed = 7;
function jitter(amount) {
  seed = (seed * 16807) % 2147483647;
  return (seed / 2147483647 - 0.5) * amount;
}

function span(profile, y) {
  let i = 0;
  while (i < profile.length - 2 && profile[i + 1][0] < y) i++;
  const [y0, l0, r0] = profile[i];
  const [y1, l1, r1] = profile[i + 1];
  const t = (y - y0) / (y1 - y0);
  return [l0 + (l1 - l0) * t, r0 + (r1 - r0) * t];
}

function triangulate(profile, step, cells) {
  const lines = [];
  for (let y = profile[0][0]; y <= profile[profile.length - 1][0]; y += step) {
    const [l, r] = span(profile, y);
    const line = [];
    for (let c = 0; c <= cells; c++) {
      const edge = c === 0 || c === cells;
      line.push([l + (r - l) * c / cells + (edge ? 0 : jitter(2)), y + (edge ? 0 : jitter(2))]);
    }
    lines.push(line);
  }
  const at = p => p[0].toFixed(1) + " " + p[1].toFixed(1);
  let d = "";
  for (let i = 0; i < lines.length - 1; i++) {
    for (let c = 0; c < cells; c++) {
      const a = lines[i][c], b = lines[i][c + 1], e = lines[i + 1][c], f = lines[i + 1][c + 1];
      d += (i + c) % 2 ? `M${at(b)}L${at(a)}L${at(e)}L${at(b)}` : `M${at(b)}L${at(a)}L${at(e)}M${at(a)}L${at(f)}`;
    }
  }
  return d;
}

document.getElementById("shaft").setAttribute("d", triangulate(rows, 4, 6));
document.getElementById("plateau").setAttribute("d", triangulate(cap, 3, 10));
```
